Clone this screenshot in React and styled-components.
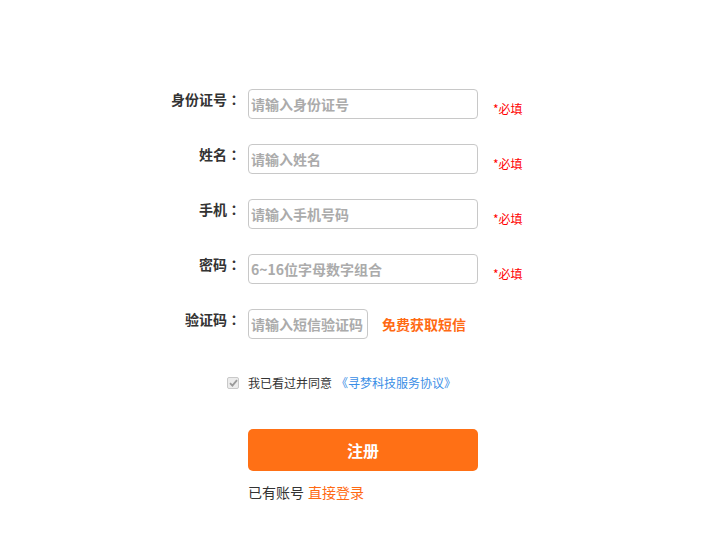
import React from "react";
import styled, { createGlobalStyle } from "styled-components";

const Global = createGlobalStyle`
  html, body { margin: 0; padding: 0; background: #fff; }
  body { font-family: "Noto Sans CJK SC", "Microsoft YaHei", sans-serif; color: #333; }
  * { box-sizing: border-box; }
`;

const Page = styled.div`
  padding: 89px 0 0 141px;
  width: 710px;
  height: 552px;
`;

const Form = styled.div`
  display: grid;
  grid-template-columns: 100px 230px auto;
  column-gap: 7px;
  align-items: start;
`;

const Label = styled.label`
  grid-column: 1;
  text-align: right;
  font-size: 14px;
  font-weight: bold;
  line-height: 21px;
  color: #333;
  white-space: nowrap;
  margin-bottom: 25px;
`;

const Colon = styled.span`
  font-family: "Noto Sans CJK TC", sans-serif;
`;

const Input = styled.input`
  grid-column: 2;
  width: ${(p) => p.$w || 230}px;
  height: 30px;
  border: 1px solid #c8c8c8;
  border-radius: 4px;
  padding: 0 2px;
  font-family: inherit;
  font-size: 14px;
  font-weight: bold;
  color: #333;
  outline: none;
  margin-bottom: ${(p) => (p.$flush ? 0 : 25)}px;
  &::placeholder { color: #ababab; }
`;

const Required = styled.span`
  grid-column: 3;
  margin: 10px 0 0 8px;
  font-size: 12px;
  line-height: 20px;
  color: #ff0000;
  white-space: nowrap;
`;

const CodeCell = styled.div`
  grid-column: 2 / span 2;
  display: flex;
  align-items: center;
  gap: 14px;
  margin-bottom: 25px;
`;

const SmsLink = styled.a`
  font-size: 14px;
  font-weight: bold;
  color: #ff6a13;
  line-height: 30px;
  text-decoration: none;
  cursor: pointer;
`;

const Check = styled.span`
  grid-column: 1;
  justify-self: end;
  margin: 13px 2px 0 0;
  width: 12px;
  height: 12px;
  border: 1px solid #c9c9c9;
  border-radius: 2px;
  background: #ececec;
  display: flex;
  align-items: center;
  justify-content: center;
`;

const Agree = styled.div`
  grid-column: 2 / span 2;
  margin-top: 8px;
  font-size: 12px;
  line-height: 22px;
  color: #333;
  white-space: nowrap;
`;

const Protocol = styled.a`
  color: #3a8ee6;
  text-decoration: none;
  margin-left: 4px;
`;

const Submit = styled.button`
  grid-column: 2;
  margin-top: 35px;
  width: 230px;
  height: 42px;
  border: none;
  border-radius: 5px;
  background: #ff7015;
  color: #fff;
  font-family: inherit;
  font-size: 16px;
  font-weight: bold;
  cursor: pointer;
`;

const Login = styled.div`
  grid-column: 2;
  margin-top: 10px;
  font-size: 14px;
  line-height: 22px;
  color: #333;
  & a { color: #ff6a13; text-decoration: none; margin-left: 4px; }
`;

const fields = [
  { label: "身份证号", ph: "请输入身份证号" },
  { label: "姓名", ph: "请输入姓名" },
  { label: "手机", ph: "请输入手机号码" },
  { label: "密码", ph: "6~16位字母数字组合", type: "password" },
];

export default function App() {
  return (
    <Page>
      <Global />
      <Form>
        {fields.map((f) => (
          <React.Fragment key={f.label}>
            <Label>
              {f.label}
              <Colon>：</Colon>
            </Label>
            <Input type={f.type || "text"} placeholder={f.ph} />
            <Required>*必填</Required>
          </React.Fragment>
        ))}
        <Label>
          验证码<Colon>：</Colon>
        </Label>
        <CodeCell>
          <Input $w={120} $flush placeholder="请输入短信验证码" />
          <SmsLink>免费获取短信</SmsLink>
        </CodeCell>
        <Check>
          <svg width="9" height="8" viewBox="0 0 9 8">
            <path d="M1 4.2 L3.4 6.6 L8 1.2" fill="none" stroke="#9a9a9a" strokeWidth="1.8" />
          </svg>
        </Check>
        <Agree>
          我已看过并同意<Protocol>《寻梦科技服务协议》</Protocol>
        </Agree>
        <Submit>注册</Submit>
        <Login>
          已有账号<a>直接登录</a>
        </Login>
      </Form>
    </Page>
  );
}
